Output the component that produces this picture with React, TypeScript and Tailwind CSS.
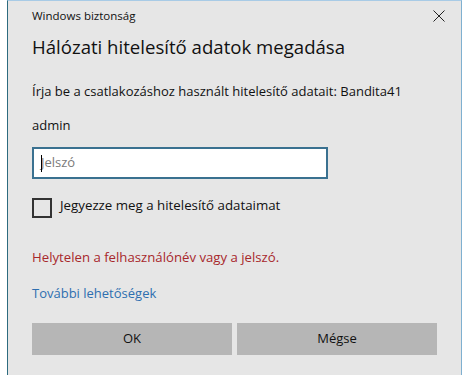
export default function App() {
  return (
    <div className="w-[464px] h-[375px] bg-white overflow-hidden" style={{ fontFamily: '"Open Sans", "Noto Sans", sans-serif' }}>
      <div className="ml-[7px] w-[455px] h-[375px] bg-[#e6e6e6] border-l border-l-[#2d6b7f] border-r border-r-[#7fb0d0] border-t border-t-[#a8cbe6] pl-[24px] pt-[5px] text-[#111]">
        {/* header */}
        <div className="flex items-center justify-between pr-[16px] h-[20px] leading-[20px]">
          <span className="text-[11.5px]">Windows biztonság</span>
          <svg width="12" height="12" viewBox="0 0 12 12">
            <path d="M0.5 0.5 L11.5 11.5 M11.5 0.5 L0.5 11.5" stroke="#222" strokeWidth="1" />
          </svg>
        </div>

        <h1 className="mt-[7px] text-[18.6px] leading-[28px] font-normal">Hálózati hitelesítő adatok megadása</h1>

        <p className="mt-[20px] text-[13px] leading-[20px]">Írja be a csatlakozáshoz használt hitelesítő adatait: Bandita41</p>

        <p className="mt-[14px] text-[13px] leading-[20px]">admin</p>

        <div className="relative mt-[12px] w-[296px] h-[32px] bg-white border-2 border-[#3a7190] flex items-center pl-[7px]">
          <span className="text-[13px] text-[#7a7a7a]">Jelszó</span>
          <span className="absolute left-[7px] top-[6px] w-px h-[17px] bg-black" />
        </div>

        <div className="mt-[16px] flex items-start gap-[8px]">
          <div className="mt-[3px] w-[20px] h-[20px] border-2 border-[#333]" />
          <span className="text-[13.3px] leading-[20px]">Jegyezze meg a hitelesítő adataimat</span>
        </div>

        <p className="mt-[29px] text-[13.2px] leading-[20px] text-[#a8282c]">Helytelen a felhasználónév vagy a jelszó.</p>

        <p className="mt-[16px] text-[13px] leading-[20px] text-[#2e6fb0]">További lehetőségek</p>

        <div className="mt-[20px] flex gap-[5px]">
          <button className="w-[200px] h-[32px] bg-[#b6b6b6] text-[13px] text-[#111]">OK</button>
          <button className="w-[200px] h-[32px] bg-[#b6b6b6] text-[13px] text-[#111]">Mégse</button>
        </div>
      </div>
    </div>
  );
}
